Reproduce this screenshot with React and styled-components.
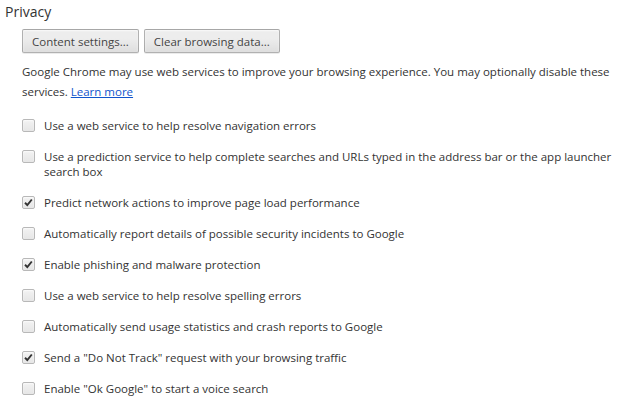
import React from "react";
import styled, { createGlobalStyle } from "styled-components";

const Global = createGlobalStyle`
  html, body { margin: 0; padding: 0; background: #fff; }
  body { font-family: "Open Sans", "Noto Sans", sans-serif; color: #333; }
`;

const Page = styled.div`
  width: 635px;
  height: 410px;
  box-sizing: border-box;
  padding: 3px 0 0 5px;
  overflow: hidden;
`;

const Title = styled.h3`
  margin: 0;
  font-size: 14px;
  font-weight: 400;
  line-height: 18px;
  color: #333;
`;

const Section = styled.div`
  padding-left: 17px;
  padding-right: 20px;
`;

const ButtonRow = styled.div`
  display: flex;
  gap: 5px;
  margin-top: 8px;
`;

const Button = styled.button`
  height: 24px;
  padding: 0 9px;
  font-family: inherit;
  font-size: 11.5px;
  color: #444;
  border: 1px solid rgba(0, 0, 0, 0.25);
  border-radius: 2px;
  background: linear-gradient(#ededed, #ededed 38%, #dedede);
  box-shadow: 0 1px 0 rgba(0, 0, 0, 0.08), inset 0 1px 2px rgba(255, 255, 255, 0.75);
`;

const Para = styled.p`
  margin: 9px 0 0;
  font-size: 11.5px;
  line-height: 20px;
`;

const Link = styled.a`
  color: #15c;
  text-decoration: underline;
`;

const List = styled.div`
  display: flex;
  flex-direction: column;
  gap: 16px;
  margin-top: 16px;
`;

const Row = styled.label`
  display: flex;
  align-items: flex-start;
  gap: 9px;
  font-size: 11.5px;
  line-height: 15px;
`;

const Box = styled.span`
  flex: none;
  width: 13px;
  height: 13px;
  margin-top: 1px;
  box-sizing: border-box;
  border: 1px solid #b8b8b8;
  border-radius: 2px;
  background: linear-gradient(#f2f2f2, #e6e6e6);
  box-shadow: inset 0 1px 2px rgba(255,255,255,0.7);
  display: flex;
  align-items: center;
  justify-content: center;
`;

const Text = styled.span``;

const Check = () => (
  <svg width="9" height="9" viewBox="0 0 9 9">
    <path d="M1 4.8 L3.3 7 L7.8 1.5" fill="none" stroke="#333" strokeWidth="1.9" />
  </svg>
);

const items = [
  ["Use a web service to help resolve navigation errors", false],
  ["Use a prediction service to help complete searches and URLs typed in the address bar or the app launcher search box", false],
  ["Predict network actions to improve page load performance", true],
  ["Automatically report details of possible security incidents to Google", false],
  ["Enable phishing and malware protection", true],
  ["Use a web service to help resolve spelling errors", false],
  ["Automatically send usage statistics and crash reports to Google", false],
  ["Send a \"Do Not Track\" request with your browsing traffic", true],
  ["Enable \"Ok Google\" to start a voice search", false],
];

export default function App() {
  return (
    <Page>
      <Global />
      <Title>Privacy</Title>
      <Section>
        <ButtonRow>
          <Button>Content settings...</Button>
          <Button>Clear browsing data...</Button>
        </ButtonRow>
        <Para>
          Google Chrome may use web services to improve your browsing experience. You may optionally disable these services. <Link href="#">Learn more</Link>
        </Para>
        <List>
          {items.map(([t, c]) => (
            <Row key={t}>
              <Box>{c && <Check />}</Box>
              <Text>{t}</Text>
            </Row>
          ))}
        </List>
      </Section>
    </Page>
  );
}
